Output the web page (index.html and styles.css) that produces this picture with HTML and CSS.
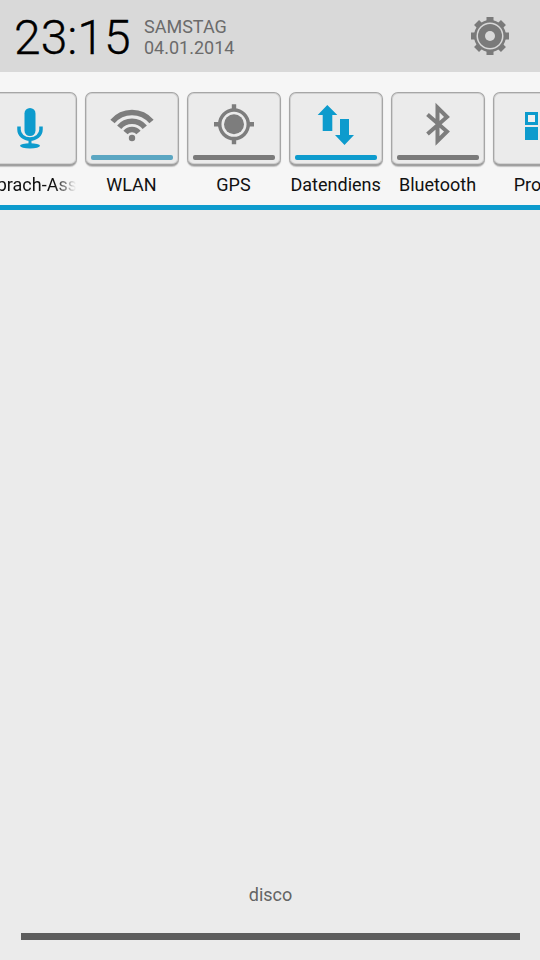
FILE: index.html
```html
<!DOCTYPE html>
<html lang="de">
<head>
<meta charset="utf-8">
<title>Benachrichtigungen</title>
<link rel="stylesheet" href="styles.css">
</head>
<body>
<header class="status">
  <div class="clock">23:15</div>
  <div class="date"><div>SAMSTAG</div><div>04.01.2014</div></div>
  <svg class="gear" viewBox="0 0 38 38" width="38" height="38">
    <g fill="#7a7a7a">
      <rect x="15.500" y="0" width="7" height="38"/>
      <rect x="15.500" y="0" width="7" height="38" transform="rotate(45 19 19)"/>
      <rect x="15.500" y="0" width="7" height="38" transform="rotate(90 19 19)"/>
      <rect x="15.500" y="0" width="7" height="38" transform="rotate(135 19 19)"/>
      <circle cx="19" cy="19" r="16"/>
    </g>
    <circle cx="19" cy="19" r="13.500" fill="#d9d9d9"/>
    <circle cx="19" cy="19" r="12" fill="#7a7a7a"/>
    <circle cx="19" cy="19" r="5" fill="#d9d9d9"/>
  </svg>
</header>
<section class="tray">
  <div class="strip">
    <div class="tile">
      <div class="button">
        <svg class="icon" viewBox="0 0 60 54" width="60" height="54">
          <rect x="24.500" y="10" width="11" height="28" rx="5.500" fill="#0d9bcd"/>
          <path d="M19 28.500v3c0 5.500 5 9.500 11 9.500s11-4 11-9.500v-3" fill="none" stroke="#0d9bcd" stroke-width="3.500"/>
          <rect x="28.500" y="40" width="3" height="7" fill="#0d9bcd"/>
          <ellipse cx="30" cy="47.800" rx="10" ry="2.600" fill="#0d9bcd"/>
        </svg>
      </div>
      <div class="label label-fade">Sprach-Assistent</div>
    </div>
    <div class="tile">
      <div class="button">
        <svg class="icon" viewBox="0 0 60 54" width="60" height="54">
          <g fill="none" stroke="#7d7d7d" stroke-width="5.500">
            <path d="M10.500 23.600A25.500 25.500 0 0 1 49.500 23.600"/>
            <path d="M17.200 29.300A16.700 16.700 0 0 1 42.800 29.300"/>
            <path d="M23.500 34.500A8.500 8.500 0 0 1 36.500 34.500"/>
          </g>
          <circle cx="30" cy="40" r="3.200" fill="#7d7d7d"/>
        </svg>
        <div class="bar bar-wifi"></div>
      </div>
      <div class="label">WLAN</div>
    </div>
    <div class="tile">
      <div class="button">
        <svg class="icon" viewBox="0 0 60 54" width="60" height="54">
          <circle cx="30" cy="26.300" r="14.300" fill="none" stroke="#7d7d7d" stroke-width="3.500"/>
          <circle cx="30" cy="26.300" r="10" fill="#7d7d7d"/>
          <path d="M27.800 6.300h4.400v6h-4.400zM27.800 40.300h4.400v6h-4.400zM10 24.100h6v4.400h-6zM44 24.100h6v4.400h-6z" fill="#7d7d7d"/>
        </svg>
        <div class="bar bar-off"></div>
      </div>
      <div class="label">GPS</div>
    </div>
    <div class="tile">
      <div class="button">
        <svg class="icon" viewBox="0 0 60 54" width="60" height="54">
          <path d="M21.300 7 31.300 17H26.300V33H16.700V17H11.700zM34 21H43V37H48L38.500 47 29 37H34z" fill="#0d9bcd"/>
        </svg>
        <div class="bar bar-on"></div>
      </div>
      <div class="label">Datendienst</div>
    </div>
    <div class="tile">
      <div class="button">
        <svg class="icon" viewBox="0 0 60 54" width="60" height="54">
          <path d="M19.500 16.500 39 33.500 29.500 43V9.500L39 19 19.500 36" fill="none" stroke="#7d7d7d" stroke-width="4"/>
        </svg>
        <div class="bar bar-off"></div>
      </div>
      <div class="label">Bluetooth</div>
    </div>
    <div class="tile">
      <div class="button">
        <svg class="icon" viewBox="0 0 60 54" width="60" height="54">
          <rect x="16.500" y="15.500" width="10" height="10" fill="#f0f0f0" stroke="#0d9bcd" stroke-width="3"/>
          <rect x="15" y="29" width="13" height="13" fill="#0d9bcd"/>
        </svg>
      </div>
      <div class="label">Profile</div>
    </div>
  </div>
</section>
<main class="list">
  <div class="carrier">disco</div>
  <div class="handle"></div>
</main>
</body>
</html>
```
FILE: styles.css
```css
* { box-sizing: border-box; }
html, body { margin: 0; padding: 0; }
body {
  width: 540px;
  height: 960px;
  overflow: hidden;
  display: flex;
  flex-direction: column;
  background: #ebebeb;
  font-family: Roboto, sans-serif;
}
.status {
  height: 72px;
  flex: none;
  background: #d9d9d9;
  display: flex;
  align-items: center;
  padding-left: 14px;
}
.clock {
  font-size: 48px;
  line-height: 72px;
  color: #000;
  font-weight: 300;
  -webkit-text-stroke: 0.3px #000;
  width: 130px;
  margin-top: 3px;
}
.date {
  font-size: 18px;
  line-height: 21px;
  color: #6b6b6b;
  margin-top: 1px;
}
.gear { margin-left: auto; margin-right: 31px; flex: none; }
.tray {
  height: 138px;
  flex: none;
  background: #f6f6f6;
  border-bottom: 5px solid #0d9bcd;
  overflow: hidden;
}
.strip {
  display: flex;
  gap: 6px;
  margin-left: -18px;
  padding-top: 20px;
  width: 640px;
}
.tile { width: 96px; flex: none; display: flex; flex-direction: column; align-items: center; }
.button {
  width: 94px;
  height: 74px;
  border: 1px solid #a6a6a6;
  border-bottom: 2px solid #a0a0a0;
  border-radius: 7px;
  background: #ebebeb;
  box-shadow: inset 0 0 0 1px #d2d2d2, 0 1px 1px #c4c4c4;
  display: flex;
  flex-direction: column;
  align-items: center;
  padding: 5px 5px 4px;
}
.icon { flex: none; }
.bar { width: 82px; height: 5px; border-radius: 2px; margin-top: auto; flex: none; }
.bar-off { background: #7a7a7a; }
.bar-wifi { background: #5ba6c2; }
.bar-on { background: #0d9bcd; }
.label {
  width: 90px;
  margin-top: 9px;
  margin-right: 1px;
  font-size: 18px;
  line-height: 20px;
  color: #111;
  text-align: center;
  white-space: nowrap;
  overflow: hidden;
}
.label-fade {
  align-self: flex-start;
  margin-left: 4px;
  margin-right: 0;
  -webkit-mask-image: linear-gradient(to right, #000 76%, transparent 100%);
  mask-image: linear-gradient(to right, #000 76%, transparent 100%);
}
.list {
  flex: 1;
  display: flex;
  flex-direction: column;
  justify-content: flex-end;
  align-items: center;
  padding: 0 20px 20px 21px;
}
.carrier { font-size: 18px; line-height: 20px; color: #646464; margin-bottom: 28px; }
.handle { width: 100%; height: 7px; background: #5d5d5d; }
```
